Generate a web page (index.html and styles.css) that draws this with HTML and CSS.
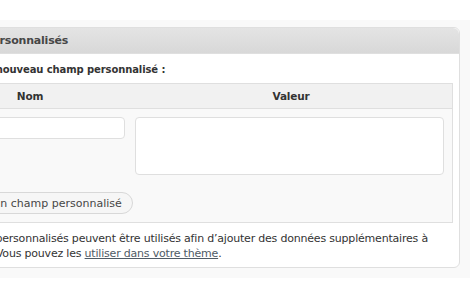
FILE: index.html
```html
<!DOCTYPE html>
<html>
<head>
  <title>Champs personnalisés</title>
<link rel="stylesheet" href="styles.css">
</head>
<body>
<div class="page">
 <div class="postbox">
  <h3 class="hndle">Champs personnalisés</h3>
  <div class="inside">
   <p class="newmeta"><strong>Ajouter un nouveau champ personnalisé :</strong></p>
   <table class="metatable">
    <thead>
     <tr>
      <th class="col-key">Nom</th>
      <th class="col-value">Valeur</th>
     </tr>
    </thead>
    <tbody>
     <tr>
      <td class="cell-key"><input type="text" class="metakey"></td>
      <td class="cell-value"><textarea class="metavalue" rows="2" cols="25"></textarea></td>
     </tr>
     <tr>
      <td colspan="2" class="submit"><button class="addmeta">Ajouter un champ personnalisé</button></td>
     </tr>
    </tbody>
   </table>
   <p class="desc">Les champs personnalisés peuvent être utilisés afin d&rsquo;ajouter des données supplémentaires à<br>vos articles. Vous pouvez les <a href="#">utiliser dans votre thème</a>.</p>
  </div>
 </div>
</div>
</body>
</html>
```

FILE: styles.css
```css
body{
	margin: 0;
	background: #fff;
	font-family: "DejaVu Sans", sans-serif;
	font-size: 11px;
	letter-spacing: -0.2px;
	color: #333;
	overflow: hidden;
}

.page{
	margin-top: 20px;
	background: #f9f9f9;
	padding: 7px 10px 10px 0;
}

.postbox{
	margin-left: -82px;
	background: #fff;
	border: 1px solid #dfdfdf;
	border-radius: 6px;
}

.hndle{
	margin: 0;
	height: 25px;
	line-height: 25px;
	padding-left: 14px;
	font-size: 11px;
	letter-spacing: -0.2px;
	color: #464646;
	background: linear-gradient(#e4e4e4, #d8d8d8);
	border-radius: 6px 6px 0 0;
	border-bottom: 1px solid #dfdfdf;
}

.inside{
	padding: 0 6px 0 10px;
}

.newmeta{
	margin: 10px 0 8px;
	padding-left: 5px;
	font-size: 10px;
	letter-spacing: -0.1px;
	color: #333;
}

.metatable{
	width: 100%;
	border-collapse: collapse;
	border: 1px solid #dfdfdf;
	background: #f9f9f9;
}

.metatable th{
	height: 24px;
	padding: 0;
	background: #f1f1f1;
	border-bottom: 1px solid #dfdfdf;
	font-size: 10.5px;
	color: #333;
	font-weight: bold;
	text-align: center;
}

.col-key{
	width: 200px;
}

.metatable td{
	vertical-align: top;
}

.cell-key{
	padding: 8px 5px 0 5px;
}

.cell-value{
	padding: 8px 8px 0 5px;
}

.metakey{
	display: block;
	width: 100%;
	height: 22px;
	box-sizing: border-box;
	border: 1px solid #dfdfdf;
	border-radius: 4px;
	background: #fff;
	margin: 0;
}

.metavalue{
	display: block;
	width: 100%;
	height: 58px;
	box-sizing: border-box;
	border: 1px solid #dfdfdf;
	border-radius: 4px;
	background: #fff;
	margin: 0;
	resize: none;
}

.submit{
	padding: 17px 5px 8px 9px;
}

.addmeta{
	display: block;
	height: 22px;
	padding: 0 10px;
	font-family: "DejaVu Sans", sans-serif;
	font-size: 11px;
	letter-spacing: 0;
	color: #464646;
	background: #f6f6f6;
	border: 1px solid #d8d8d8;
	border-radius: 11px;
}

.desc{
	margin: 8px 0 0;
	padding-bottom: 6px;
	line-height: 15px;
	color: #333;
}

.desc a{
	color: #4f5b66;
}
```
